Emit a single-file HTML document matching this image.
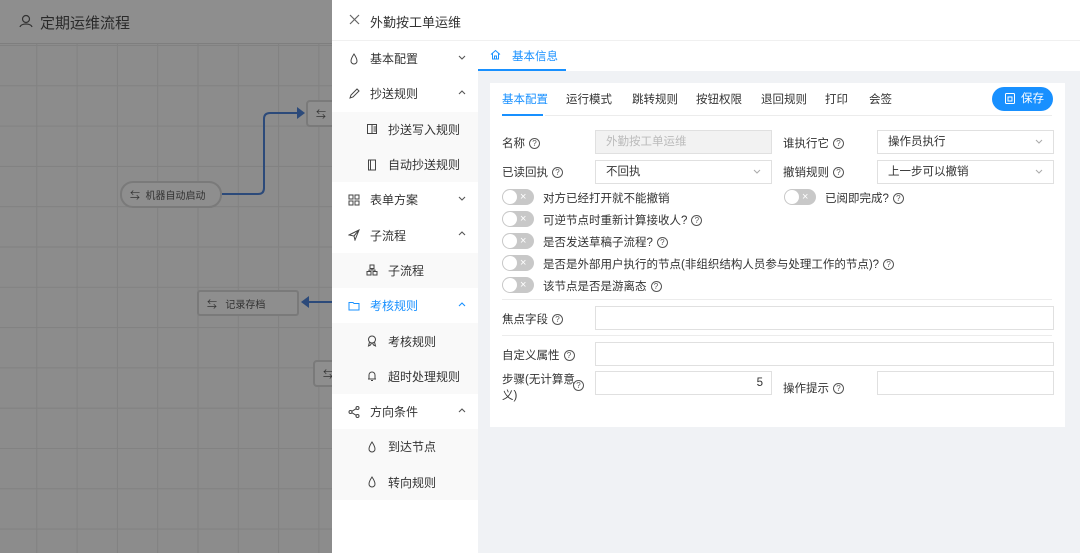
<!DOCTYPE html>
<html><head><meta charset="utf-8"><style>
*{box-sizing:border-box;margin:0;padding:0}
body{width:1080px;height:553px;overflow:hidden;position:relative;font-family:"Liberation Sans","Noto Sans CJK SC",sans-serif;font-size:12px;color:#333;background:#8e8e8e}
.abs{position:absolute}
.grid{left:0;top:44px;width:332px;height:509px;background-color:#8c8c8c;background-image:linear-gradient(#818181 1px,transparent 1px),linear-gradient(90deg,#818181 1px,transparent 1px);background-size:40.3px 40.3px;background-position:-4px 1px}
.lhead{left:0;top:0;width:332px;height:44px;background:#8e8e8e;border-bottom:1px solid #7e7e7e;font-size:15px;color:#2a2a2a}
.node{border:2px solid #7a7a7a;background:#8e8e8e;color:#333;font-size:10px;display:flex;align-items:center;padding-left:8px}
.drawer{left:332px;top:0;width:748px;height:553px;background:#fff}
.menu{left:332px;top:41px;width:146px}
.mi{height:35.3px;display:flex;align-items:center;padding-left:16px;font-size:12px;color:#333;position:relative}
.mi svg.ic{width:12px;height:12px;margin-right:10px;flex:none}
.mi.sub{background:#f9f9f9;padding-left:34px}
.mi .ar{position:absolute;right:12px;top:14px}
.content{left:478px;top:41px;width:602px;height:512px;background:#f0f2f5}
.card{left:490px;top:83px;width:575px;height:344px;background:#fff}
.t{position:absolute;font-size:11.5px;color:#333;white-space:nowrap}
.inp{position:absolute;border:1px solid #e0e0e0;background:#fff;height:24px;font-size:11.5px;padding-left:10px;line-height:22px;color:#333}
.q{display:inline-block;width:11px;height:11px;border:1px solid #555;border-radius:50%;font-size:8px;line-height:9px;text-align:center;margin-left:4px;vertical-align:middle;color:#555}
.sw{position:absolute;left:502px;width:32px;height:16px;border-radius:8px;background:#c8c8c8}
.sw::before{content:"";position:absolute;left:1px;top:1px;width:14px;height:14px;border-radius:50%;background:#fff}
.sw::after{content:"×";position:absolute;left:18px;top:0;color:#fff;font-size:11px;line-height:16px}
.dv{position:absolute;height:1px;background:#ececec;left:502px;width:550px}
.arr{position:absolute;right:10px;top:8px}
</style></head><body>
<svg width="0" height="0" style="position:absolute"><defs>
<symbol id="dn" viewBox="0 0 8 5"><path d="M1 1 L4 4 L7 1" fill="none" stroke="#555" stroke-width="1.1"/></symbol>
<symbol id="up" viewBox="0 0 8 5"><path d="M1 4 L4 1 L7 4" fill="none" stroke="#555" stroke-width="1.1"/></symbol>
<symbol id="drop" viewBox="0 0 12 12"><path d="M6 1 C4 4 3 6 3 8 A3 3 0 0 0 9 8 C9 6 8 4 6 1Z" fill="none" stroke="#444" stroke-width="1"/></symbol>
</defs></svg>
<div class="abs grid"></div>
<div class="abs lhead"><svg class="abs" style="left:19px;top:14px" width="14" height="14" viewBox="0 0 14 14"><circle cx="7" cy="5" r="3.5" fill="none" stroke="#333" stroke-width="1.2"/><path d="M1 13 C2 9 12 9 13 13" fill="none" stroke="#333" stroke-width="1.2"/></svg><span class="abs" style="left:40px;top:12px">定期运维流程</span></div>
<div class="abs node" style="left:120px;top:181px;width:102px;height:27px;border-radius:13px">⇆&nbsp;&nbsp;机器自动启动</div>
<div class="abs node" style="left:306px;top:100px;width:40px;height:27px;border-radius:4px">⇆</div>
<div class="abs node" style="left:197px;top:290px;width:102px;height:26px;border-radius:3px">⇆&nbsp;&nbsp;&nbsp;记录存档</div>
<div class="abs node" style="left:313px;top:360px;width:40px;height:27px;border-radius:4px">⇆</div>
<svg class="abs" style="left:0;top:0" width="332" height="553"><path d="M222 194 H258 Q264 194 264 188 V119 Q264 113 270 113 H298" fill="none" stroke="#2c4a7a" stroke-width="2"/><path d="M297 107 L305 113 L297 119Z" fill="#2c4a7a"/><path d="M306 302 H332" stroke="#2c4a7a" stroke-width="2"/><path d="M309 296 L301 302 L309 308Z" fill="#2c4a7a"/></svg>

<div class="abs drawer"></div>
<svg class="abs" style="left:349px;top:14px" width="11" height="11" viewBox="0 0 11 11"><path d="M1 1 L10 10 M10 1 L1 10" stroke="#666" stroke-width="1.2"/></svg>
<div class="abs" style="left:370px;top:12px;font-size:13px;color:#333">外勤按工单运维</div>
<div class="abs" style="left:332px;top:40px;width:748px;height:1px;background:#f0f0f0"></div>
<div class="abs menu">
<div class="mi"><svg class="ic"><use href="#drop"/></svg>基本配置<svg class="ar" width="8" height="5"><use href="#dn"/></svg></div>
<div class="mi"><svg class="ic" viewBox="0 0 12 12"><path d="M2 10 L3 7 L9 1 L11 3 L5 9Z" fill="none" stroke="#444"/></svg>抄送规则<svg class="ar" width="8" height="5"><use href="#up"/></svg></div>
<div class="mi sub"><svg class="ic" viewBox="0 0 12 12"><rect x="1.5" y="1.5" width="9" height="9" fill="none" stroke="#444"/><path d="M6 1.5 V10.5 M7.5 4 H10 M7.5 6 H10 M7.5 8 H10" stroke="#444"/></svg>抄送写入规则</div>
<div class="mi sub"><svg class="ic" viewBox="0 0 12 12"><rect x="2.5" y="1" width="7" height="10" fill="none" stroke="#444"/><path d="M4.5 1 V11" stroke="#444"/></svg>自动抄送规则</div>
<div class="mi"><svg class="ic" viewBox="0 0 12 12"><g fill="none" stroke="#444"><rect x="1" y="1" width="4" height="4"/><rect x="7" y="1" width="4" height="4"/><rect x="1" y="7" width="4" height="4"/><rect x="7" y="7" width="4" height="4"/></g></svg>表单方案<svg class="ar" width="8" height="5"><use href="#dn"/></svg></div>
<div class="mi"><svg class="ic" viewBox="0 0 12 12"><path d="M1 6 L11 1 L7 11 L6 7Z M6 7 L11 1" fill="none" stroke="#444"/></svg>子流程<svg class="ar" width="8" height="5"><use href="#up"/></svg></div>
<div class="mi sub"><svg class="ic" viewBox="0 0 12 12"><g fill="none" stroke="#444"><rect x="4" y="1" width="4" height="3.5"/><rect x="1" y="7.5" width="4" height="3.5"/><rect x="7" y="7.5" width="4" height="3.5"/><path d="M6 4.5 V6 H3 V7.5 M6 6 H9 V7.5"/></g></svg>子流程</div>
<div class="mi" style="color:#1890ff"><svg class="ic" viewBox="0 0 12 12"><path d="M1 2.5 H5 L6 3.5 H11 V10 H1Z" fill="none" stroke="#1890ff"/></svg>考核规则<svg class="ar" width="8" height="5" viewBox="0 0 8 5"><path d="M1 4 L4 1 L7 4" fill="none" stroke="#1890ff" stroke-width="1.1"/></svg></div>
<div class="mi sub"><svg class="ic" viewBox="0 0 12 12"><g fill="none" stroke="#444"><circle cx="6" cy="4.5" r="3.5"/><path d="M3.5 7 L2.5 11 L4.5 10 L5.5 8 M8.5 7 L9.5 11 L7.5 10 L6.5 8"/></g></svg>考核规则</div>
<div class="mi sub"><svg class="ic" viewBox="0 0 12 12"><g fill="none" stroke="#444"><path d="M3 9 V5 A3 3 0 0 1 9 5 V9 M2 9 H10 M5 10.5 H7"/></g></svg>超时处理规则</div>
<div class="mi"><svg class="ic" viewBox="0 0 12 12"><g fill="none" stroke="#444"><circle cx="2.5" cy="6" r="1.5"/><circle cx="9.5" cy="2" r="1.5"/><circle cx="9.5" cy="10" r="1.5"/><path d="M4 5.2 L8 2.8 M4 6.8 L8 9.2"/></g></svg>方向条件<svg class="ar" width="8" height="5"><use href="#up"/></svg></div>
<div class="mi sub"><svg class="ic"><use href="#drop"/></svg>到达节点</div>
<div class="mi sub"><svg class="ic"><use href="#drop"/></svg>转向规则</div>
</div>
<div class="abs content"></div>
<div class="abs" style="left:478px;top:41px;width:602px;height:30px;background:#fff"></div>
<div class="abs" style="left:478px;top:41px;width:88px;height:30px;border-bottom:2px solid #1890ff;color:#1890ff;font-size:11.5px;padding:7px 0 0 34px">基本信息</div>
<svg class="abs" style="left:490px;top:49px" width="11" height="11" viewBox="0 0 11 11"><path d="M1 5.5 L5.5 1.5 L10 5.5 M2.5 4.5 V10 H8.5 V4.5 M4.5 10 V7 H6.5 V10" fill="none" stroke="#1890ff"/></svg>
<div class="abs card"></div>
<div class="t" style="left:502px;top:91px;color:#1890ff">基本配置</div>
<div class="abs" style="left:502px;top:114px;width:41px;height:2px;background:#1890ff"></div>
<div class="t" style="left:566px;top:91px">运行模式</div>
<div class="t" style="left:632px;top:91px">跳转规则</div>
<div class="t" style="left:696px;top:91px">按钮权限</div>
<div class="t" style="left:761px;top:91px">退回规则</div>
<div class="t" style="left:825px;top:91px">打印</div>
<div class="t" style="left:869px;top:91px">会签</div>
<div class="abs" style="left:992px;top:87px;width:61px;height:24px;border-radius:12px;background:#1890ff;color:#fff;font-size:11.5px;line-height:24px;padding-left:29px">保存</div>
<svg class="abs" style="left:1005px;top:93px" width="10" height="11" viewBox="0 0 10 11"><rect x="0.5" y="0.5" width="9" height="10" rx="1" fill="none" stroke="#fff"/><rect x="3" y="4" width="4" height="4" fill="none" stroke="#fff"/></svg>
<div class="dv" style="top:115px;left:545px;width:507px"></div>

<div class="t" style="left:502px;top:135px">名称<span class="q">?</span></div>
<div class="inp" style="left:595px;top:130px;width:177px;background:#f2f2f2;color:#bbb">外勤按工单运维</div>
<div class="t" style="left:783px;top:135px">谁执行它<span class="q">?</span></div>
<div class="inp" style="left:877px;top:130px;width:177px">操作员执行<svg class="arr" width="8" height="5" viewBox="0 0 8 5"><path d="M1 1 L4 4 L7 1" fill="none" stroke="#aaa"/></svg></div>
<div class="t" style="left:502px;top:164px">已读回执<span class="q">?</span></div>
<div class="inp" style="left:595px;top:160px;width:177px">不回执<svg class="arr" width="8" height="5" viewBox="0 0 8 5"><path d="M1 1 L4 4 L7 1" fill="none" stroke="#aaa"/></svg></div>
<div class="t" style="left:783px;top:164px">撤销规则<span class="q">?</span></div>
<div class="inp" style="left:877px;top:160px;width:177px">上一步可以撤销<svg class="arr" width="8" height="5" viewBox="0 0 8 5"><path d="M1 1 L4 4 L7 1" fill="none" stroke="#aaa"/></svg></div>

<div class="sw" style="top:189px"></div><div class="t" style="left:543px;top:190px">对方已经打开就不能撤销</div>
<div class="sw" style="top:189px;left:784px"></div><div class="t" style="left:825px;top:190px">已阅即完成?<span class="q">?</span></div>
<div class="sw" style="top:211px"></div><div class="t" style="left:543px;top:212px">可逆节点时重新计算接收人?<span class="q">?</span></div>
<div class="sw" style="top:233px"></div><div class="t" style="left:543px;top:234px">是否发送草稿子流程?<span class="q">?</span></div>
<div class="sw" style="top:255px"></div><div class="t" style="left:543px;top:256px">是否是外部用户执行的节点(非组织结构人员参与处理工作的节点)?<span class="q">?</span></div>
<div class="sw" style="top:277px"></div><div class="t" style="left:543px;top:278px">该节点是否是游离态<span class="q">?</span></div>
<div class="dv" style="top:299px"></div>
<div class="t" style="left:502px;top:311px">焦点字段<span class="q">?</span></div>
<div class="inp" style="left:595px;top:306px;width:459px"></div>
<div class="dv" style="top:335px"></div>
<div class="t" style="left:502px;top:347px">自定义属性<span class="q">?</span></div>
<div class="inp" style="left:595px;top:342px;width:459px"></div>
<div class="t" style="left:502px;top:372px;line-height:16px">步骤(无计算意<br>义)</div>
<div class="t" style="left:569px;top:380px"><span class="q">?</span></div>
<div class="inp" style="left:595px;top:371px;width:177px;text-align:right;padding-right:8px">5</div>
<div class="t" style="left:783px;top:380px">操作提示<span class="q">?</span></div>
<div class="inp" style="left:877px;top:371px;width:177px"></div>
</body></html>
